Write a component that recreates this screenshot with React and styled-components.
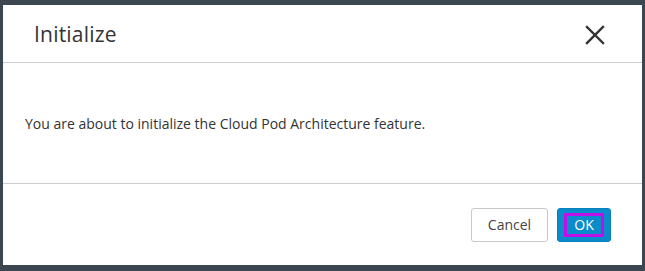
import React from 'react'
import styled, { createGlobalStyle } from 'styled-components';

const Global = createGlobalStyle`
  html, body { margin: 0; padding: 0; background: #3c4650; }
  body { font-family: "Open Sans", "Liberation Sans", sans-serif; }
`

function App() {
    return (
        <>
            <Global />
            <Page>
                <Modal>
                    <Header>
                        <Title>Initialize</Title>
                        <Close aria-label="close">
                            <svg width="20" height="20" viewBox="0 0 20 20">
                                <path d="M2 2 L18 18 M18 2 L2 18" stroke="#333" strokeWidth="2.4" strokeLinecap="square" fill="none" />
                            </svg>
                        </Close>
                    </Header>
                    <Body>You are about to initialize the Cloud Pod Architecture feature.</Body>
                    <Footer>
                        <Button>Cancel</Button>
                        <Button primary><Focus>OK</Focus></Button>
                    </Footer>
                </Modal>
            </Page>
        </>
    )
}

export default App

const Page = styled.div`
    width: 645px;
    height: 271px;
    padding: 5px 3px 6px 3px;
    box-sizing: border-box;
`

const Modal = styled.div`
    width: 639px;
    height: 260px;
    background: #fff;
    display: flex;
    flex-direction: column;
`

const Header = styled.div`
    height: 57px;
    border-bottom: 1px solid #cccccc;
    display: flex;
    align-items: center;
    justify-content: space-between;
    padding: 0 37px 0 31px;
`

const Title = styled.h3`
    margin: 0;
    font-family: "Open Sans", sans-serif;
    font-weight: 400;
    font-size: 21px;
    color: #333;
    letter-spacing: 0.2px;
`

const Close = styled.button`
    border: none;
    background: none;
    padding: 0;
    display: flex;
    margin-top: 2px;
`

const Body = styled.div`
    height: 120px;
    border-bottom: 1px solid #cccccc;
    padding: 0 22px;
    display: flex;
    align-items: center;
    font-size: 14px;
    color: #333;
`

const Footer = styled.div`
    flex: 1;
    display: flex;
    justify-content: flex-end;
    align-items: center;
    gap: 9px;
    padding: 0 31px 0 0;
`

const Button = styled.button`
    height: 34px;
    box-sizing: border-box;
    border-radius: 3px;
    font-family: "Open Sans", sans-serif;
    font-size: 14px;
    padding: ${p => p.primary ? '2px' : '0 16px'};
    width: ${p => p.primary ? '54px' : '77px'};
    background: ${p => p.primary ? '#0a8ccb' : '#fff'};
    color: ${p => p.primary ? '#fff' : '#444'};
    border: 1px solid ${p => p.primary ? '#0a7fbd' : '#c8c8c8'};
    display: flex;
    align-items: center;
    justify-content: center;
`

const Focus = styled.span`
    flex: 1;
    align-self: stretch;
    margin: 2px 4px;
    border: 3px solid #c010e8;
    display: flex;
    align-items: center;
    justify-content: center;
    font-size: 14px;
`
